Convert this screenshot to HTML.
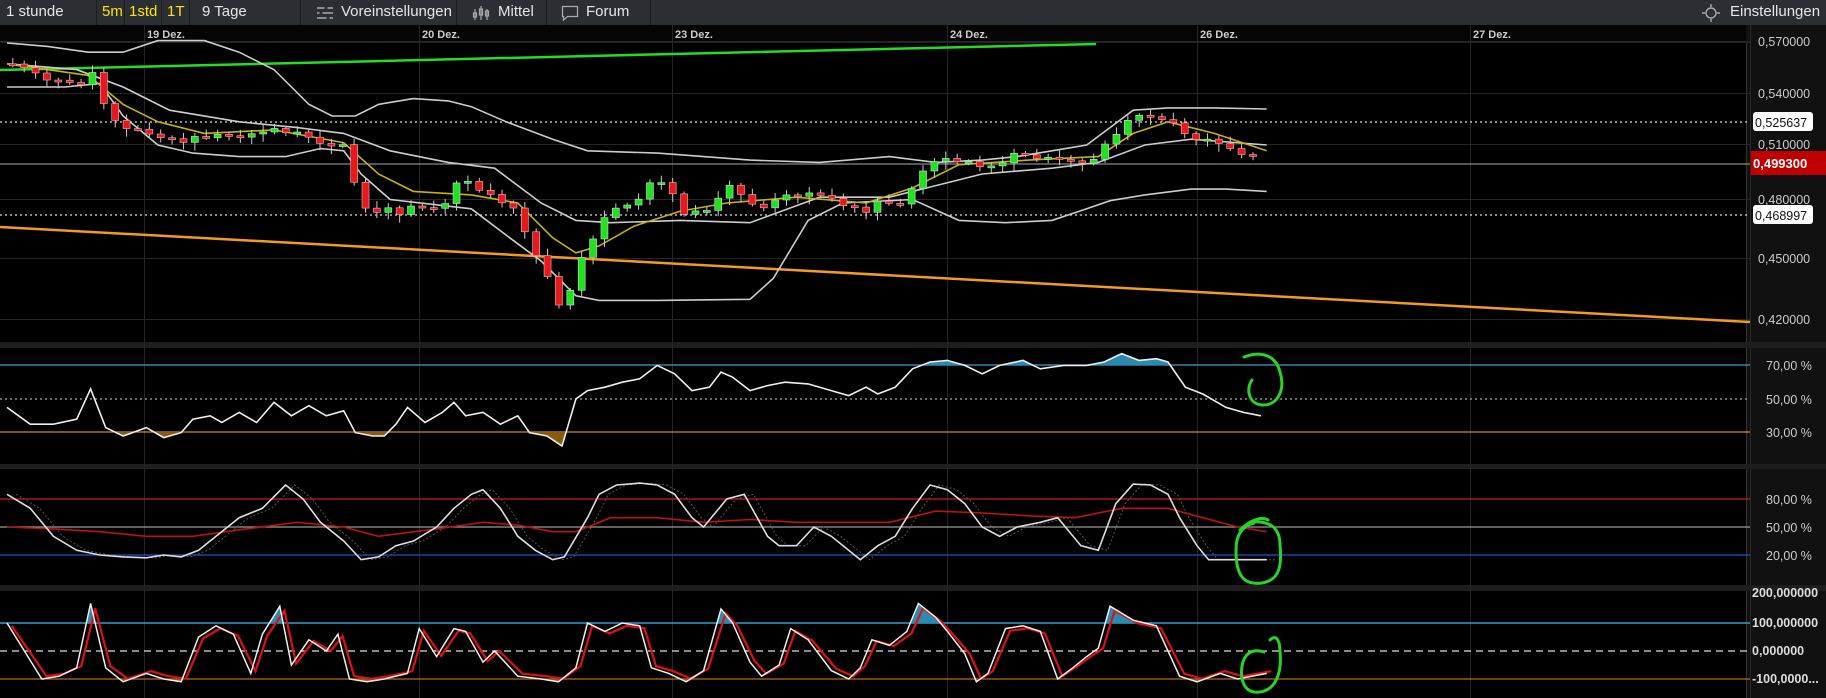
<!DOCTYPE html>
<html><head><meta charset="utf-8"><style>
html,body{margin:0;padding:0;background:#000;width:1826px;height:698px;overflow:hidden;font-family:"Liberation Sans",sans-serif}
#tb{position:absolute;left:0;top:0;width:1826px;height:25px;background:#2b2e33;color:#e6e6e6;font-size:15px}
#tb span{position:absolute;top:3px;white-space:nowrap}
#tb i{position:absolute;top:0;width:1px;height:25px;background:#1a1c1f}
.y{color:#ffe600}
svg{position:absolute;left:0;top:0}
</style></head><body>
<svg id="c" width="1826" height="698" xmlns="http://www.w3.org/2000/svg"></svg>
<div id="tb">
<span style="left:6px">1 stunde</span><i style="left:96px"></i>
<span class="y" style="left:102px">5m</span><i style="left:124px"></i>
<span class="y" style="left:129px">1std</span><i style="left:161px"></i>
<span class="y" style="left:167px">1T</span><i style="left:189px"></i>
<span style="left:202px">9 Tage</span><i style="left:300px"></i>
<svg width="18" height="16" style="left:316px;top:5px"><g stroke="#aaa" stroke-width="1.5"><path d="M1 3h16M1 8h16M1 13h16"/></g><g stroke="#2b2e33" stroke-width="3"><path d="M10 1v4M5 6v4M12 11v4"/></g></svg>
<span style="left:341px">Voreinstellungen</span><i style="left:456px"></i>
<svg width="18" height="16" style="left:472px;top:5px"><g stroke="#aaa" stroke-width="1.2" fill="none"><path d="M3 4v11M9 1v14M15 4v11"/><rect x="1.5" y="8" width="3" height="4"/><rect x="7.5" y="4" width="3" height="6"/><rect x="13.5" y="6" width="3" height="5"/></g></svg>
<span style="left:498px">Mittel</span><i style="left:546px"></i>
<svg width="18" height="16" style="left:561px;top:5px"><path d="M1.5 1.5h15v10h-10l-4 3.5v-3.5h-1z" stroke="#aaa" stroke-width="1.3" fill="none"/></svg>
<span style="left:586px">Forum</span><i style="left:650px"></i>
<svg width="18" height="18" style="left:1702px;top:4px"><g stroke="#aaa" stroke-width="1.4" fill="none"><circle cx="9" cy="9" r="5"/><path d="M9 0v3M9 15v3M0 9h3M15 9h3"/></g></svg>
<span style="left:1730px">Einstellungen</span>
</div>
<script>
const NS="http://www.w3.org/2000/svg",S=document.getElementById('c');
function el(t,a,p){const e=document.createElementNS(NS,t);for(const k in a)e.setAttribute(k,a[k]);(p||S).appendChild(e);return e;}
const X=d=>1.161*d+7;
function interp(arr,d){for(let i=0;i<arr.length-1;i++){const[a,b]=[arr[i],arr[i+1]];if(d>=a[0]&&d<=b[0]){return a[1]+(b[1]-a[1])*(d-a[0])/(b[0]-a[0]);}}return d<arr[0][0]?arr[0][1]:arr[arr.length-1][1];}
function pathOf(arr,fy){return 'M'+arr.map(p=>X(p[0]).toFixed(1)+' '+fy(p[1]).toFixed(1)).join(' L');}
el('rect',{x:0,y:25,width:1826,height:673,fill:'#000'});
el('rect',{x:0,y:25,width:1750,height:17,fill:'#050505'});
el('rect',{x:1746,y:25,width:80,height:673,fill:'#111'});
el('line',{x1:1746.5,y1:42,x2:1746.5,y2:698,stroke:'#333'});
el('line',{x1:1750.5,y1:25,x2:1750.5,y2:698,stroke:'#2a2a2a'});
[[342,6],[464,5],[585,6]].forEach(s=>el('rect',{x:0,y:s[0],width:1826,height:s[1],fill:'#1e1e1e'}));
el('line',{x1:0,y1:42.5,x2:1750,y2:42.5,stroke:'#222'});
const gx=[144,419,672,947,1197,1470],gl=['19 Dez.','20 Dez.','23 Dez.','24 Dez.','26 Dez.','27 Dez.'];
gx.forEach((x,i)=>{el('line',{x1:x+.5,y1:25,x2:x+.5,y2:698,stroke:'#262626'});const t=el('text',{x:x+3,y:38,fill:'#ccc','font-size':11,'font-weight':'bold','font-family':'Liberation Sans'});t.textContent=gl[i];});
[[41,'0,570000'],[93,'0,540000'],[144,'0,510000'],[199,'0,480000'],[258,'0,450000'],[319,'0,420000']].forEach(p=>{el('line',{x1:0,y1:p[0]+.5,x2:1750,y2:p[0]+.5,stroke:'#262626'});const t=el('text',{x:1758,y:p[0]+5,fill:'#ccc','font-size':12.5});t.textContent=p[1];});
[[122,'0,525637'],[215,'0,468997']].forEach(p=>{el('line',{x1:0,y1:p[0],x2:1750,y2:p[0],stroke:'#ddd','stroke-width':1.3,'stroke-dasharray':'2 3'});el('rect',{x:1753,y:p[0]-10,width:60,height:19,rx:3,fill:'#fff'});const t=el('text',{x:1755,y:p[0]+5,fill:'#111','font-size':12.5});t.textContent=p[1];});
el('line',{x1:0,y1:164,x2:1750,y2:164,stroke:'#aaa','stroke-width':1});
el('rect',{x:1751,y:151,width:75,height:24,fill:'#c00000'});
{const t=el('text',{x:1753,y:168,fill:'#fff','font-size':13,'font-weight':'bold'});t.textContent='0,499300';}
el('line',{x1:0,y1:70,x2:1096,y2:44,stroke:'#22dd22','stroke-width':2.5});
el('line',{x1:0,y1:227,x2:1750,y2:322,stroke:'#f59a1a','stroke-width':2.5});
const MY=d=>1.16*d;
const up=[[0,37],[35,40],[70,45],[100,45],[130,35],[170,35],[200,45],[230,60],[260,90],[280,100],[300,100],[320,90],[350,85],[380,87],[400,92],[430,105],[470,120],[500,130],[560,132],[640,138],[700,140],[760,135],[800,140],[840,138],[870,135],[900,130],[930,125],[950,110],[970,95],[1000,93],[1040,93],[1085,94]];
const lo=[[0,75],[50,75],[80,72],[100,100],[130,125],[160,132],[200,135],[240,135],[270,128],[290,130],[305,150],[330,172],[400,180],[433,205],[460,225],[490,255],[510,259],[560,259],[640,258],[660,240],[690,190],[720,175],[780,172],[820,190],[860,192],[900,190],[930,180],[950,173],[980,168],[1020,163],[1050,163],[1085,165]];
const mid=[[0,55],[60,60],[100,75],[140,95],[200,105],[250,110],[290,115],[330,130],[380,140],[420,145],[460,175],[490,190],[520,192],[580,190],[640,192],[700,170],[760,170],[800,160],[840,150],[900,145],[940,140],[980,125],[1020,120],[1085,125]];
const sma=[[0,55],[70,65],[100,90],[130,105],[170,115],[230,112],[290,123],[320,150],[350,165],[400,168],[440,175],[470,205],[490,218],[510,212],[540,195],[580,182],[620,175],[680,170],[740,175],[780,162],[820,142],[880,138],[940,135],[970,115],[1000,105],[1040,115],[1085,130]];
[up,lo,mid].forEach(a=>el('path',{d:pathOf(a,MY),fill:'none',stroke:'#ccc','stroke-width':1.6}));
el('path',{d:pathOf(sma,MY),fill:'none',stroke:'#c8b400','stroke-width':1.6});
const cl=[[5,57],[20,60],[40,70],[65,72],[75,63],[85,95],[95,105],[105,110],[120,115],[135,118],[150,125],[160,117],[175,117],[200,117],[215,117],[230,110],[250,115],[265,120],[280,128],[290,125],[300,160],[310,180],[320,185],[330,178],[340,185],[350,178],[360,180],[375,178],[385,160],[395,155],[410,165],[425,175],[440,180],[450,210],[460,230],[470,245],[480,276],[490,230],[500,215],[515,185],[530,178],[540,175],[555,158],[570,158],[580,183],[595,183],[610,180],[615,160],[625,162],[640,175],[655,178],[670,168],[690,168],[710,170],[725,178],[740,183],[750,172],[765,180],[775,172],[785,148],[795,142],[810,136],[825,140],[840,145],[855,140],[870,132],[885,135],[900,138],[920,138],[935,140],[950,118],[960,112],[970,100],[985,100],[1000,102],[1010,113],[1020,118],[1035,122],[1050,126],[1065,132],[1080,138]];
let prev=55,k=0;
for(let d=5;d<=1081;d+=9.8){const c=interp(cl,d)+((k*37)%7-3)*0.6;k++;const o=prev;prev=c;const x=X(d);const top=Math.min(o,c),bot=Math.max(o,c);const g=c<o;
 const wt=top-2-((k*13)%5),wb=bot+2+((k*7)%6);
 el('line',{x1:x,y1:MY(wt),x2:x,y2:MY(wb),stroke:'#ccc','stroke-width':1});
 let h=MY(bot)-MY(top);if(h<2)h=2;
 el('rect',{x:x-3.5,y:MY(top),width:7,height:h,fill:g?'#22e022':'#e8191d',stroke:g?'#bfe8bf':'#f0b0b0','stroke-width':0.6});}
const RY=v=>399-(v-50)*1.68;
[[365,'#3aa0d0',''],[399,'#aaa','2 3'],[432,'#d08a2a','']].forEach(l=>el('line',{x1:0,y1:l[0],x2:1750,y2:l[0],stroke:l[1],'stroke-width':1.3,'stroke-dasharray':l[2]}));
[[365,'70,00 %'],[399,'50,00 %'],[432,'30,00 %'],[499,'80,00 %'],[527,'50,00 %'],[555,'20,00 %']].forEach(p=>{const t=el('text',{x:1766,y:p[0]+5,fill:'#ccc','font-size':12.5});t.textContent=p[1];});
const rsi=[[0,45],[10,40],[20,35],[40,35],[60,38],[72,56],[85,33],[100,28],[120,33],[135,27],[150,30],[160,38],[175,40],[185,36],[200,42],[215,36],[230,48],[245,40],[260,46],[275,40],[290,43],[300,30],[315,28],[325,28],[335,35],[345,45],[360,36],[375,42],[385,48],[395,40],[410,42],[425,35],[440,40],[450,30],[465,28],[478,22],[490,50],[500,55],[515,57],[530,60],[545,62],[560,70],[575,65],[590,55],[605,57],[615,66],[625,63],[640,55],[655,58],[670,60],[690,59],[710,55],[725,52],[740,57],[750,53],[765,57],[780,68],[795,72],[810,73],[825,70],[840,65],[855,70],[875,73],[890,68],[910,70],[930,70],[945,72],[960,77],[975,73],[990,74],[1000,72],[1015,57],[1030,53],[1050,45],[1065,42],[1080,40]];
function fills(arr,fy,lev,above,col,id){const d=pathOf(arr,fy)+` L${X(arr[arr.length-1][0])} ${lev} L${X(arr[0][0])} ${lev}Z`;const cp=el('clipPath',{id:id});el('rect',{x:0,y:above?0:lev,width:1750,height:above?lev:698-lev},cp);el('path',{d:d,fill:col,'clip-path':`url(#${id})`});}
fills(rsi,RY,432,false,'#8a5a10','r1');fills(rsi,RY,365,true,'#2a8ab0','r2');
el('path',{d:pathOf(rsi,RY),fill:'none',stroke:'#eee','stroke-width':1.6});
const SY=v=>527-(v-50)*0.933;
[[499,'#d01818'],[527,'#999'],[555,'#2050d0']].forEach(l=>el('line',{x1:0,y1:l[0],x2:1750,y2:l[0],stroke:l[1],'stroke-width':1.3}));
const sk=[[0,85],[20,70],[40,40],[60,25],[80,20],[100,18],[120,17],[135,20],[150,18],[165,25],[180,40],[200,60],[220,70],[240,95],[255,80],[270,55],[290,35],[305,15],[320,18],[335,30],[350,35],[370,50],[385,70],[400,85],[410,90],[425,70],[440,40],[455,25],[470,15],[480,18],[500,60],[510,85],[525,95],[545,97],[560,95],[575,85],[590,60],[600,50],[620,80],[635,85],[655,40],[665,30],[680,30],[695,50],[710,40],[725,25],[735,15],[750,30],[765,40],[780,70],[795,95],[810,90],[825,75],[840,50],[855,40],[870,50],[890,55],[905,60],[925,30],[940,25],[955,75],[970,96],[985,95],[1000,85],[1010,60],[1025,30],[1035,15],[1050,15],[1085,15]];
const sd=[[0,50],[40,48],[80,45],[120,40],[160,40],[200,47],[250,55],[290,50],[320,40],[370,48],[410,55],[440,52],[470,45],[490,45],[520,60],[560,60],[600,55],[640,58],[680,55],[720,55],[760,55],[800,67],[840,65],[880,62],[920,60],[960,70],[1000,70],[1030,60],[1060,50],[1085,45]];
el('path',{d:pathOf(sk.map(p=>[p[0]+8,p[1]]),SY),fill:'none',stroke:'#555','stroke-width':1,'stroke-dasharray':'2 2'});
el('path',{d:pathOf(sd,SY),fill:'none',stroke:'#c01010','stroke-width':1.6});
el('path',{d:pathOf(sk,SY),fill:'none',stroke:'#ddd','stroke-width':1.6});
const CY=v=>651-v*0.28;
el('line',{x1:0,y1:623,x2:1750,y2:623,stroke:'#2a9fd0','stroke-width':1.5});
el('line',{x1:0,y1:651,x2:1750,y2:651,stroke:'#ddd','stroke-width':1.3,'stroke-dasharray':'7 5'});
el('line',{x1:0,y1:679,x2:1750,y2:679,stroke:'#b86a20','stroke-width':1.3});
[[597,'200,000000'],[627,'100,000000'],[655,'0,000000'],[683,'-100,0000...']].forEach(p=>{const t=el('text',{x:1752,y:p[0],fill:'#ddd','font-size':12.5,'font-weight':'bold'});t.textContent=p[1];});
const cci=[[0,100],[15,0],[30,-100],[45,-90],[60,-60],[72,170],[85,-60],[100,-110],[120,-80],[135,-100],[150,-110],[165,50],[180,90],[195,60],[210,-80],[220,60],[235,160],[245,-50],[260,40],[275,0],[285,60],[295,-100],[310,-110],[325,-100],[345,-80],[355,80],[370,-20],[385,80],[395,70],[410,-40],[420,0],[440,-90],[460,-100],[475,-110],[490,-60],[500,100],[515,70],[530,100],[545,90],[555,-60],[570,-80],[585,-110],[600,-70],[615,150],[625,100],[640,-40],[650,-90],[665,-50],[675,80],[690,40],[710,-70],[725,-100],[735,-60],[745,40],[760,20],[775,70],[785,170],[800,120],[810,70],[825,-10],[835,-110],[845,-80],[860,80],[875,90],[890,70],[905,-100],[918,-60],[930,-20],[940,10],[950,160],[970,110],[990,90],[1010,-90],[1025,-110],[1045,-80],[1060,-100],[1085,-80]];
fills(cci,CY,679,false,'#8a5a10','c1');fills(cci,CY,623,true,'#2a8ab0','c2');
el('path',{d:pathOf(cci.map(p=>[p[0]+4,p[1]*0.9]),CY),fill:'none',stroke:'#e01010','stroke-width':2.2});
el('path',{d:pathOf(cci,CY),fill:'none',stroke:'#eee','stroke-width':1.5});
const gs={fill:'none',stroke:'#27d424','stroke-width':3,'stroke-linecap':'round'};
el('path',Object.assign({d:'M1244 357 C1262 350 1276 356 1280 372 C1286 392 1276 406 1262 405 C1248 404 1246 388 1252 380'},gs));
el('path',Object.assign({d:'M1240 530 C1250 520 1262 516 1268 520 M1250 522 C1270 520 1280 528 1280 545 C1282 565 1280 580 1262 583 C1240 586 1236 570 1236 550 C1236 535 1242 526 1254 523'},gs));
el('path',Object.assign({d:'M1270 640 C1276 634 1280 640 1280 652 C1282 672 1276 690 1260 692 C1244 694 1240 680 1242 666 C1244 654 1252 648 1264 652'},gs));
</script>
</body></html>
